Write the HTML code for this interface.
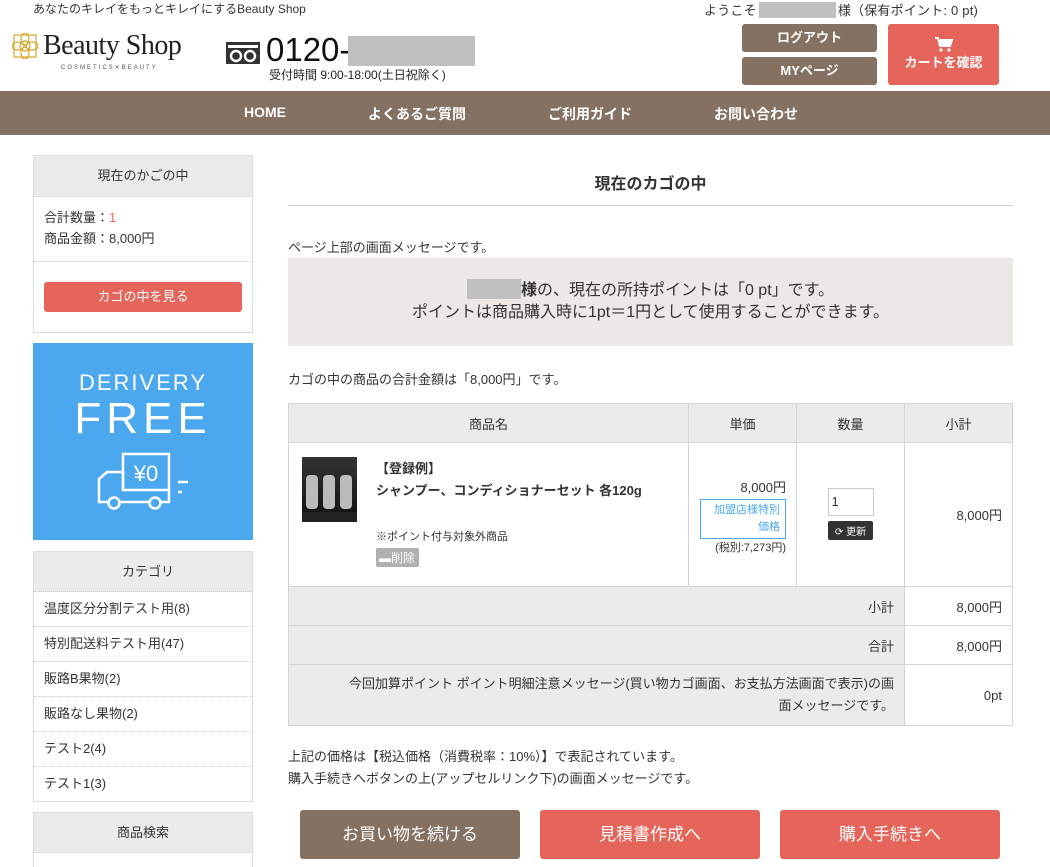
<!DOCTYPE html>
<html><head><meta charset="utf-8"><style>
*{margin:0;padding:0;box-sizing:border-box}
html,body{width:1050px;height:867px;overflow:hidden}
body{background:#fff;font-family:"Liberation Sans","Noto Sans CJK JP",sans-serif;color:#333;font-size:13px;position:relative}
.a{position:absolute}
.btn{position:absolute;color:#fff;font-weight:bold;text-align:center;border-radius:3px}
.brown{background:#857162}.red{background:#e5655a}
.side{position:absolute;left:33px;width:220px;border:1px solid #ddd}
.sh{background:#ebebeb;text-align:center;font-size:13px;border-bottom:1px solid #ddd}
.cat div{height:35px;line-height:34px;padding-left:10px;border-bottom:1px dotted #ccc;font-size:13px}
table{border-collapse:collapse;position:absolute;left:288px;top:403px;width:725px;font-size:13px}
td,th{border:1px solid #d5d5d5}
th{background:#ebebeb;font-weight:normal;height:39px}
.g{background:#ebebeb}
.gray{background:#c0c0c0;display:inline-block}
</style></head><body>
<div class="a" style="left:33px;top:0;font-size:12px;color:#333">あなたのキレイをもっとキレイにするBeauty Shop</div>
<svg class="a" style="left:12px;top:33px" width="26" height="26" viewBox="0 0 26 26"><g fill="none" stroke="#d4a82a" stroke-width="1.2"><circle cx="13" cy="13" r="5"/><ellipse cx="13" cy="6" rx="4" ry="6"/><ellipse cx="13" cy="20" rx="4" ry="6"/><ellipse cx="6" cy="13" rx="6" ry="4"/><ellipse cx="20" cy="13" rx="6" ry="4"/><rect x="2" y="2" width="22" height="22"/></g></svg>
<div class="a" style="left:43px;top:30px;font-family:'Liberation Serif',serif;font-size:28px;color:#222;letter-spacing:-0.5px">Beauty Shop</div>
<div class="a" style="left:61px;top:64px;font-size:6px;letter-spacing:2px;color:#555">COSMETICS✕BEAUTY</div>
<svg class="a" style="left:226px;top:42px" width="34" height="22" viewBox="0 0 34 22"><rect width="34" height="22" fill="#333"/><rect x="2" y="3" width="30" height="3" fill="#fff"/><circle cx="10" cy="14" r="5" fill="none" stroke="#fff" stroke-width="2.4"/><circle cx="24" cy="14" r="5" fill="none" stroke="#fff" stroke-width="2.4"/></svg>
<div class="a" style="left:266px;top:31px;font-size:33px;color:#111">0120-</div>
<div class="a gray" style="left:348px;top:36px;width:127px;height:30px"></div>
<div class="a" style="left:269px;top:66px;font-size:12px;color:#222">受付時間 9:00-18:00(土日祝除く)</div>
<div class="a" style="left:704px;top:0;font-size:13px;letter-spacing:0.2px">ようこそ<span class="gray" style="width:77px;height:16px;vertical-align:-3px;margin:0 2px"></span>様（保有ポイント: 0 pt)</div>
<div class="btn brown" style="left:742px;top:24px;width:135px;height:28px;line-height:28px;font-size:13px">ログアウト</div>
<div class="btn brown" style="left:742px;top:57px;width:135px;height:28px;line-height:28px;font-size:13px">MYページ</div>
<div class="btn red" style="left:888px;top:24px;width:111px;height:61px;font-size:13px;padding-top:12px"><svg width="20" height="16" viewBox="0 0 20 16" style="display:block;margin:0 auto 0px"><path d="M1 2h3l2 8h10l2-6H6" fill="#fff" stroke="#fff" stroke-width="2"/><circle cx="7" cy="14" r="1.6" fill="#fff"/><circle cx="15" cy="14" r="1.6" fill="#fff"/></svg>カートを確認</div>
<div class="a brown" style="left:0;top:91px;width:1050px;height:44px;color:#fff;font-weight:bold;font-size:14px">
<span class="a" style="left:244px;top:13px">HOME</span><span class="a" style="left:368px;top:13px">よくあるご質問</span><span class="a" style="left:548px;top:13px">ご利用ガイド</span><span class="a" style="left:714px;top:13px">お問い合わせ</span></div>

<div class="side" style="top:155px;height:178px"><div class="sh" style="height:41px;line-height:40px">現在のかごの中</div>
<div style="padding:10px 10px;line-height:21px;border-bottom:1px dotted #ccc;height:65px">合計数量：<span style="color:#e5655a">1</span><br>商品金額：8,000円</div>
<div class="btn red" style="left:10px;top:126px;width:198px;height:30px;line-height:30px;font-size:13px;font-weight:normal">カゴの中を見る</div></div>
<div class="a" style="left:33px;top:343px;width:220px;height:197px;background:#4ba8ef;color:#fff;text-align:center">
<div style="font-size:22px;letter-spacing:2px;margin-top:27px">DERIVERY</div>
<div style="font-size:44px;letter-spacing:5px;line-height:46px">FREE</div>
<svg width="110" height="62" viewBox="0 0 110 62" style="margin-top:10px;margin-left:12px"><g fill="none" stroke="#fff" stroke-width="2.5"><rect x="29" y="2" width="46" height="36"/><path d="M29 38V20H13L5 27v23h70V38"/><circle cx="20" cy="51" r="5.5" fill="#4ba8ef"/><circle cx="61" cy="51" r="5.5" fill="#4ba8ef"/><path d="M84 30h10M84 40h4"/></g><text x="52" y="29" fill="#fff" font-size="22" text-anchor="middle" font-family="Liberation Sans">¥0</text></svg></div>
<div class="side cat" style="top:551px;height:251px"><div class="sh" style="height:40px;line-height:40px">カテゴリ</div>
<div>温度区分分割テスト用(8)</div><div>特別配送料テスト用(47)</div><div>販路B果物(2)</div><div>販路なし果物(2)</div><div>テスト2(4)</div><div style="border:0">テスト1(3)</div></div>
<div class="side" style="top:812px;height:70px"><div class="sh" style="height:40px;line-height:40px">商品検索</div></div>

<div class="a" style="left:288px;top:170px;width:725px;text-align:center;font-size:16px;font-weight:bold;padding-bottom:13px;border-bottom:1px solid #ccc;height:36px">現在のカゴの中</div>
<div class="a" style="left:288px;top:237px">ページ上部の画面メッセージです。</div>
<div class="a" style="left:288px;top:258px;width:725px;height:88px;background:#ece8e5;text-align:center;font-size:16px;line-height:22px;padding-top:21px"><span class="gray" style="width:54px;height:20px;vertical-align:-4px"></span><b>様</b>の、現在の所持ポイントは「0 pt」です。<br>ポイントは商品購入時に1pt＝1円として使用することができます。</div>
<div class="a" style="left:288px;top:369px">カゴの中の商品の合計金額は「8,000円」です。</div>
<table>
<tr><th style="width:400px">商品名</th><th style="width:108px">単価</th><th style="width:108px">数量</th><th>小計</th></tr>
<tr style="height:144px"><td style="vertical-align:top;padding:14px 13px;position:relative">
<div style="position:absolute;left:13px;top:14px;width:55px;height:65px;background:linear-gradient(#333,#111)"><svg width="55" height="65"><g fill="#bbb"><rect x="4" y="18" width="12" height="34" rx="4"/><rect x="21" y="18" width="12" height="34" rx="4"/><rect x="38" y="18" width="12" height="34" rx="4"/></g><rect y="55" width="55" height="10" fill="#222"/></svg></div>
<div style="margin-left:74px;font-weight:bold;line-height:22px;margin-top:1px">【登録例】<br>シャンプー、コンディショナーセット 各120g</div>
<div style="margin-left:74px;font-size:11px;margin-top:26px">※ポイント付与対象外商品</div>
<div style="margin-left:74px;margin-top:4px;background:#b0b0b0;color:#fff;font-size:12px;width:43px;border-radius:2px;padding:1px 3px">▬削除</div></td>
<td style="text-align:right;padding:0 10px;vertical-align:top;padding-top:34px">8,000円<div style="border:1px solid #4ba8ef;color:#4ba8ef;font-size:11px;margin:3px 0 0 0;padding:2px 5px;line-height:17px;width:86px;margin-left:auto">加盟店様特別価格</div><div style="font-size:11px">(税別:7,273円)</div></td>
<td style="text-align:center;vertical-align:top;padding-top:45px"><div style="width:46px;height:28px;border:1px solid #ccc;margin:0 auto;text-align:left;padding:5px 3px">1</div><div style="background:#333;color:#fff;font-size:10px;width:45px;margin:5px auto 0;border-radius:2px;padding:2px">⟳ 更新</div></td>
<td style="text-align:right;padding-right:10px">8,000円</td></tr>
<tr style="height:39px"><td colspan="3" class="g" style="text-align:right;padding-right:10px">小計</td><td style="text-align:right;padding-right:10px">8,000円</td></tr>
<tr style="height:39px"><td colspan="3" class="g" style="text-align:right;padding-right:10px">合計</td><td style="text-align:right;padding-right:10px">8,000円</td></tr>
<tr style="height:61px"><td colspan="3" class="g" style="text-align:right;padding:0 10px 0 14px;line-height:22px">今回加算ポイント ポイント明細注意メッセージ(買い物カゴ画面、お支払方法画面で表示)の画<br>面メッセージです。</td><td style="text-align:right;padding-right:10px">0pt</td></tr>
</table>
<div class="a" style="left:288px;top:746px;line-height:22px">上記の価格は【税込価格（消費税率：10%）】で表記されています。<br>購入手続きへボタンの上(アップセルリンク下)の画面メッセージです。</div>
<div class="btn brown" style="left:300px;top:810px;width:220px;height:49px;line-height:49px;font-size:17px;font-weight:normal">お買い物を続ける</div>
<div class="btn red" style="left:540px;top:810px;width:220px;height:49px;line-height:49px;font-size:17px;font-weight:normal">見積書作成へ</div>
<div class="btn red" style="left:780px;top:810px;width:220px;height:49px;line-height:49px;font-size:17px;font-weight:normal">購入手続きへ</div>
</body></html>
